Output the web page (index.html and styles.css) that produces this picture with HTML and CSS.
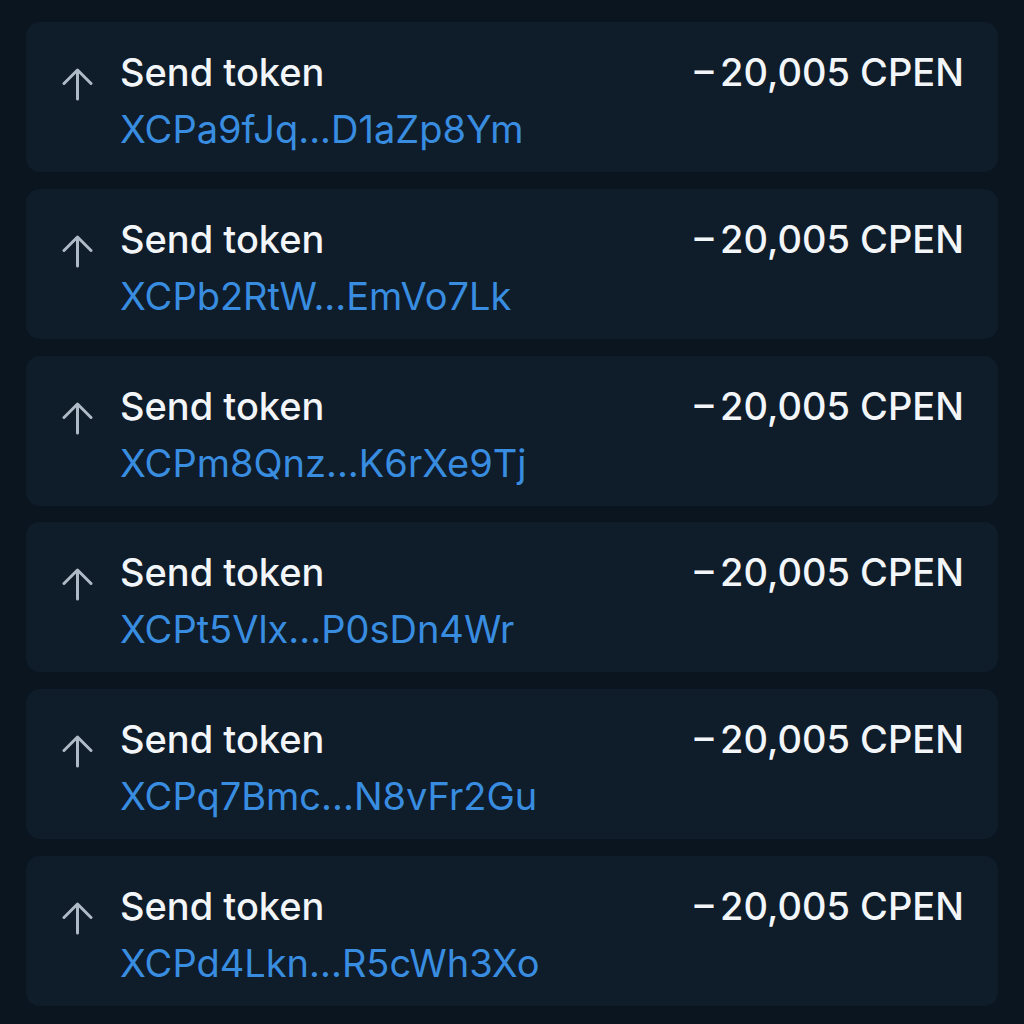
FILE: index.html
```html
<!DOCTYPE html>
<html lang="en">
<head>
  <meta charset="UTF-8" />
  <meta name="viewport" content="width=device-width, initial-scale=1.0" />
  <title>Transactions</title>
  <link rel="stylesheet" href="styles.css">
</head>
<body>
  <ul class="tx-list">
    <li class="tx">
      <svg class="tx-icon" viewBox="0 0 32 34"><path d="M15.5 32V3M2 16.5L15.5 3L29 16.5" /></svg>
      <div class="tx-info">
        <div class="tx-title">Send token</div>
        <div class="tx-addr">XCPa9fJq...D1aZp8Ym</div>
      </div>
      <div class="tx-amount">&ndash;&thinsp;20,005 CPEN</div>
    </li>
    <li class="tx">
      <svg class="tx-icon" viewBox="0 0 32 34"><path d="M15.5 32V3M2 16.5L15.5 3L29 16.5" /></svg>
      <div class="tx-info">
        <div class="tx-title">Send token</div>
        <div class="tx-addr">XCPb2RtW...EmVo7Lk</div>
      </div>
      <div class="tx-amount">&ndash;&thinsp;20,005 CPEN</div>
    </li>
    <li class="tx">
      <svg class="tx-icon" viewBox="0 0 32 34"><path d="M15.5 32V3M2 16.5L15.5 3L29 16.5" /></svg>
      <div class="tx-info">
        <div class="tx-title">Send token</div>
        <div class="tx-addr">XCPm8Qnz...K6rXe9Tj</div>
      </div>
      <div class="tx-amount">&ndash;&thinsp;20,005 CPEN</div>
    </li>
    <li class="tx">
      <svg class="tx-icon" viewBox="0 0 32 34"><path d="M15.5 32V3M2 16.5L15.5 3L29 16.5" /></svg>
      <div class="tx-info">
        <div class="tx-title">Send token</div>
        <div class="tx-addr">XCPt5Vlx...P0sDn4Wr</div>
      </div>
      <div class="tx-amount">&ndash;&thinsp;20,005 CPEN</div>
    </li>
    <li class="tx">
      <svg class="tx-icon" viewBox="0 0 32 34"><path d="M15.5 32V3M2 16.5L15.5 3L29 16.5" /></svg>
      <div class="tx-info">
        <div class="tx-title">Send token</div>
        <div class="tx-addr">XCPq7Bmc...N8vFr2Gu</div>
      </div>
      <div class="tx-amount">&ndash;&thinsp;20,005 CPEN</div>
    </li>
    <li class="tx">
      <svg class="tx-icon" viewBox="0 0 32 34"><path d="M15.5 32V3M2 16.5L15.5 3L29 16.5" /></svg>
      <div class="tx-info">
        <div class="tx-title">Send token</div>
        <div class="tx-addr">XCPd4Lkn...R5cWh3Xo</div>
      </div>
      <div class="tx-amount">&ndash;&thinsp;20,005 CPEN</div>
    </li>
  </ul>
</body>
</html>
```

FILE: styles.css
```css
body {
  margin: 0;
  padding: 22px 26px;
  background: #0a1520;
  font-family: Inter, "Noto Sans", sans-serif;
}
.tx-list {
  list-style: none;
  margin: 0;
  padding: 0;
  display: flex;
  flex-direction: column;
  gap: 16.8px;
}
.tx {
  display: flex;
  align-items: flex-start;
  height: 150px;
  box-sizing: border-box;
  padding: 22px 34px 0 36px;
  background: #0f1c29;
  border-radius: 14px;
}
.tx-icon {
  width: 32px;
  height: 34px;
  margin-top: 23px;
  margin-right: 26px;
  flex-shrink: 0;
  fill: none;
  stroke: #aebac6;
  stroke-width: 3;
  stroke-linecap: round;
  stroke-linejoin: round;
}
.tx-info {
  display: flex;
  flex-direction: column;
}
.tx-title,
.tx-addr,
.tx-amount {
  font-size: 38px;
  line-height: 57px;
}
.tx-title {
  color: #f3f6f9;
  font-weight: 500;
}
.tx-addr {
  color: #398de0;
}
.tx-amount {
  margin-left: auto;
  color: #f3f6f9;
  font-weight: 500;
}
```
